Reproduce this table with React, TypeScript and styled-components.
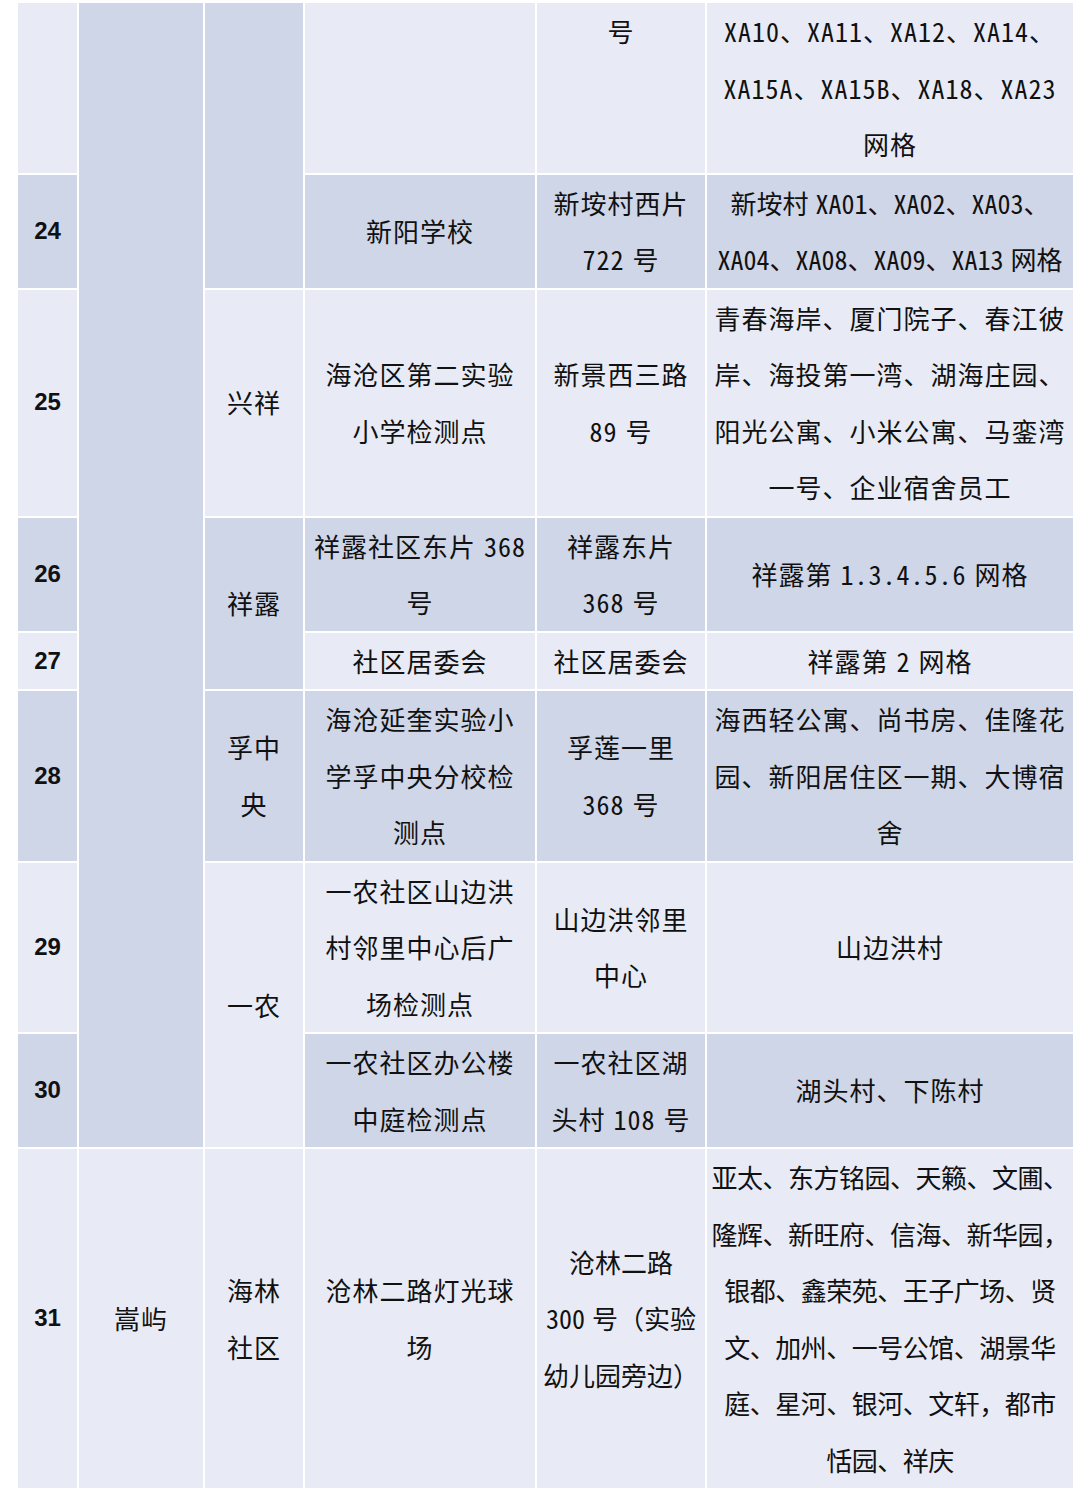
import { Fragment } from 'react'
import styled, { createGlobalStyle } from 'styled-components'

type Tone = 'light' | 'dark'

interface CellData {
  lines: string[]
  tone: Tone
  rowSpan?: number
  num?: boolean
  top?: boolean
  spacing?: number
}

const GlobalStyle = createGlobalStyle`
  html, body {
    margin: 0;
    padding: 0;
    background: #ffffff;
  }
`

const L: Tone = 'light'
const D: Tone = 'dark'

const rows: CellData[][] = [
  [
    { lines: [''], tone: L, num: true },
    { lines: [''], tone: D, rowSpan: 8 },
    { lines: [''], tone: D, rowSpan: 2 },
    { lines: [''], tone: L },
    { lines: ['号'], tone: L, top: true },
    { lines: ['XA10、XA11、XA12、XA14、', 'XA15A、XA15B、XA18、XA23', '网格'], tone: L }
  ],
  [
    { lines: ['24'], tone: D, num: true },
    { lines: ['新阳学校'], tone: D },
    { lines: ['新垵村西片', '722 号'], tone: D },
    { lines: ['新垵村 XA01、XA02、XA03、', 'XA04、XA08、XA09、XA13 网格'], tone: D, spacing: 0 }
  ],
  [
    { lines: ['25'], tone: L, num: true },
    { lines: ['兴祥'], tone: L },
    { lines: ['海沧区第二实验', '小学检测点'], tone: L },
    { lines: ['新景西三路', '89 号'], tone: L },
    {
      lines: ['青春海岸、厦门院子、春江彼', '岸、海投第一湾、湖海庄园、', '阳光公寓、小米公寓、马銮湾', '一号、企业宿舍员工'],
      tone: L
    }
  ],
  [
    { lines: ['26'], tone: D, num: true },
    { lines: ['祥露'], tone: D, rowSpan: 2 },
    { lines: ['祥露社区东片 368', '号'], tone: D },
    { lines: ['祥露东片', '368 号'], tone: D },
    { lines: ['祥露第 1.3.4.5.6 网格'], tone: D }
  ],
  [
    { lines: ['27'], tone: L, num: true },
    { lines: ['社区居委会'], tone: L },
    { lines: ['社区居委会'], tone: L },
    { lines: ['祥露第 2 网格'], tone: L }
  ],
  [
    { lines: ['28'], tone: D, num: true },
    { lines: ['孚中', '央'], tone: D },
    { lines: ['海沧延奎实验小', '学孚中央分校检', '测点'], tone: D },
    { lines: ['孚莲一里', '368 号'], tone: D },
    { lines: ['海西轻公寓、尚书房、佳隆花', '园、新阳居住区一期、大博宿', '舍'], tone: D }
  ],
  [
    { lines: ['29'], tone: L, num: true },
    { lines: ['一农'], tone: L, rowSpan: 2 },
    { lines: ['一农社区山边洪', '村邻里中心后广', '场检测点'], tone: L },
    { lines: ['山边洪邻里', '中心'], tone: L },
    { lines: ['山边洪村'], tone: L }
  ],
  [
    { lines: ['30'], tone: D, num: true },
    { lines: ['一农社区办公楼', '中庭检测点'], tone: D },
    { lines: ['一农社区湖', '头村 108 号'], tone: D },
    { lines: ['湖头村、下陈村'], tone: D }
  ],
  [
    { lines: ['31'], tone: L, num: true },
    { lines: ['嵩屿'], tone: L },
    { lines: ['海林', '社区'], tone: L },
    { lines: ['沧林二路灯光球', '场'], tone: L },
    { lines: ['沧林二路', '300 号（实验', '幼儿园旁边）'], tone: L, spacing: 0 },
    {
      lines: [
        '亚太、东方铭园、天籁、文圃、',
        '隆辉、新旺府、信海、新华园，',
        '银都、鑫荣苑、王子广场、贤',
        '文、加州、一号公馆、湖景华',
        '庭、星河、银河、文轩，都市',
        '恬园、祥庆'
      ],
      tone: L,
      spacing: -0.5
    }
  ]
]

const columnWidths = [59, 124, 98, 230, 168, 366]

const App = () => {
  return (
    <>
      <GlobalStyle />
      <Table>
        <colgroup>
          {columnWidths.map((w, i) => (
            <col key={i} style={{ width: w }} />
          ))}
        </colgroup>
        <tbody>
          {rows.map((row, r) => (
            <tr key={r}>
              {row.map((cell, c) => (
                <Cell
                  key={c}
                  rowSpan={cell.rowSpan}
                  $tone={cell.tone}
                  $num={!!cell.num}
                  $top={!!cell.top}
                  $spacing={cell.spacing ?? 1}>
                  {cell.lines.map((line, i) => (
                    <Fragment key={i}>
                      {i > 0 && <br />}
                      {line}
                    </Fragment>
                  ))}
                </Cell>
              ))}
            </tr>
          ))}
        </tbody>
      </Table>
    </>
  )
}

const Table = styled.table`
  table-layout: fixed;
  border-collapse: separate;
  border-spacing: 2px;
  margin: 1px 0 0 16px;
  width: 1059px;
`

const Cell = styled.td<{ $tone: Tone; $num: boolean; $top: boolean; $spacing: number }>`
  padding: 0;
  background: ${(p) => (p.$tone === 'dark' ? '#cfd6e8' : '#e8ebf5')};
  color: #111111;
  text-align: center;
  vertical-align: ${(p) => (p.$top ? 'top' : 'middle')};
  white-space: nowrap;
  font-family: ${(p) =>
    p.$num
      ? '"Liberation Sans", Arial, sans-serif'
      : '"Noto Sans Mono CJK SC", "Noto Sans CJK SC", sans-serif'};
  font-size: ${(p) => (p.$num ? '24px' : '26px')};
  font-weight: ${(p) => (p.$num ? 700 : 500)};
  letter-spacing: ${(p) => (p.$num ? 0 : p.$spacing)}px;
  word-spacing: -6px;
  line-height: 56.5px;
`

export default App
